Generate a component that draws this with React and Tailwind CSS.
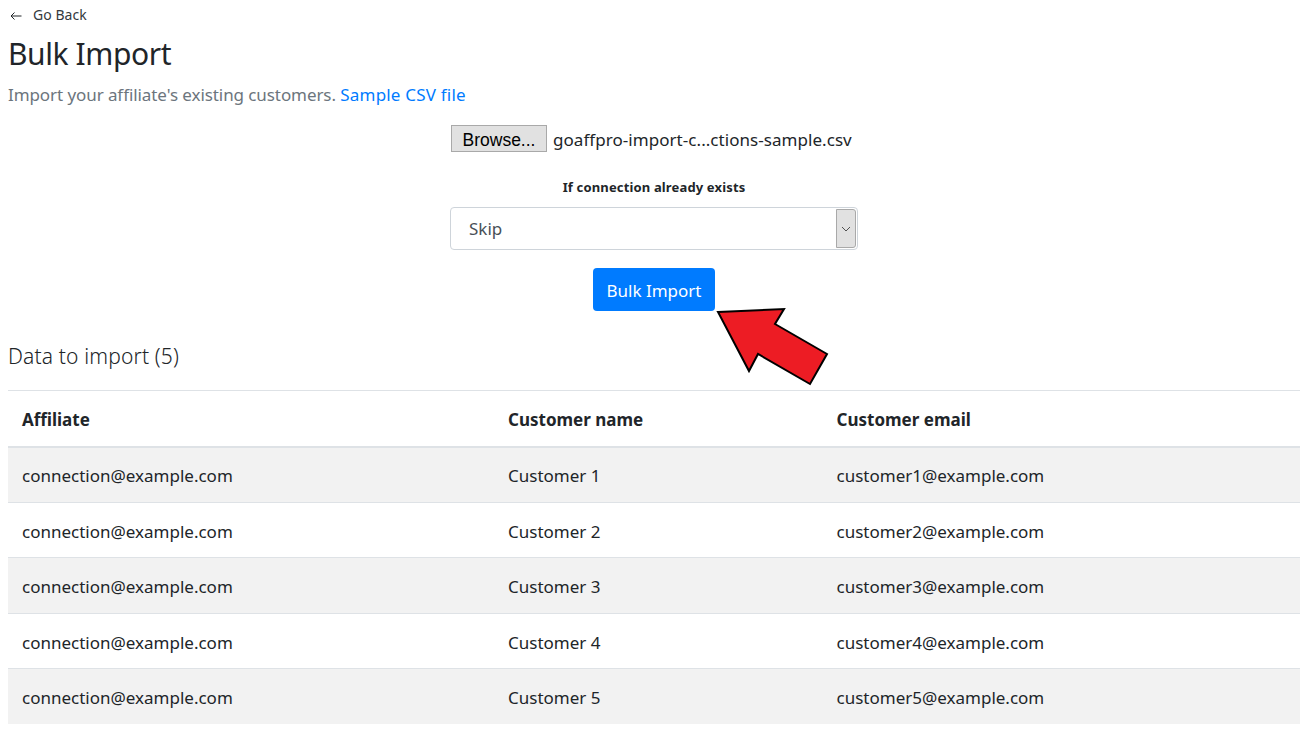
import React from "react";

const rows = [1, 2, 3, 4, 5];

const Arrow = () => (
  <svg className="absolute left-[710px] top-[300px]" width="125" height="92" viewBox="0 0 125 92">
    <polygon
      points="8,12 74,9 65,24 117,54 100,84 48,54 39,71"
      fill="#ed1c24"
      stroke="#000"
      strokeWidth="2"
    />
  </svg>
);

const App = () => {
  return (
    <div className="relative h-[732px] overflow-hidden bg-white px-2 font-['Noto_Sans',sans-serif] text-[#212529]">
      <div className="flex h-[29px] items-center pl-[2px] text-[14px] text-[#343a40]">
        <svg width="12" height="10" viewBox="0 0 12 10" fill="none" stroke="#212529" strokeWidth="1" className="mt-[3px]">
          <path d="M11.5 5H1M4.5 1.5L1 5l3.5 3.5" />
        </svg>
        <span className="ml-[11px] tracking-[0.05px]">Go Back</span>
      </div>
      <h1 className="mt-[3px] text-[30px] leading-[44px] tracking-[-0.4px]">Bulk Import</h1>
      <p className="mt-[6px] text-[17px] leading-[26px] tracking-[-0.08px] text-[#6c757d]">
        Import your affiliate's existing customers.{" "}
        <span className="tracking-[0.2px] text-[#007bff]">Sample CSV file</span>
      </p>

      <div className="flex flex-col items-center">
        <div className="mt-[17px] flex h-[27px] w-[404px] items-center -translate-x-[1px]">
          <span className="flex h-[27px] w-[96px] items-center justify-center border border-[#a9a9a9] bg-[#e1e1e1] pt-[4px] font-['Liberation_Sans',sans-serif] text-[17.5px] text-black">
            Browse...
          </span>
          <span className="ml-[6px] pt-[3px] text-[17px] tracking-[0.05px]">goaffpro-import-c...ctions-sample.csv</span>
        </div>
        <div className="mt-[25px] text-[13px] font-bold leading-[20px] tracking-[0.15px]">If connection already exists</div>
        <div className="mt-[10px] flex h-[43px] w-[408px] items-center justify-between rounded-[4px] border border-[#ced4da] pl-[18px] pr-[1px]">
          <span className="text-[17px] text-[#495057]">Skip</span>
          <span className="flex h-[39px] w-[20px] items-center justify-center rounded-r-[3px] border border-[#a9a9a9] bg-[#e1e1e1]">
            <svg width="10" height="6" viewBox="0 0 10 6" fill="none" stroke="#505050" strokeWidth="1">
              <path d="M1 1l4 4 4-4" />
            </svg>
          </span>
        </div>
        <button className="mt-[18px] h-[43px] w-[122px] rounded-[4px] bg-[#007bff] pt-[2px] text-[17px] text-white">
          Bulk Import
        </button>
      </div>

      <h2 className="mt-[30px] text-[21px] font-light leading-[30px] tracking-[0.15px]">Data to import (5)</h2>

      <table className="mt-[19px] w-[1292px] table-fixed border-collapse text-[17px]">
        <thead>
          <tr className="h-[56px] border-t border-b-2 border-t-[#dee2e6] border-b-[#dee2e6]">
            <th className="w-[486px] pl-[14px] pt-[2px] text-left font-bold">Affiliate</th>
            <th className="w-[328.5px] pl-[14px] pt-[2px] text-left font-bold">Customer name</th>
            <th className="pl-[14px] pt-[2px] text-left font-bold">Customer email</th>
          </tr>
        </thead>
        <tbody>
          {rows.map((n) => (
            <tr key={n} className={`h-[55.5px] border-b border-[#dee2e6] last:border-b-0 ${n % 2 === 1 ? "bg-[#f2f2f2]" : "bg-white"}`}>
              <td className="pl-[14px] pt-[3px]">connection@example.com</td>
              <td className="pl-[14px] pt-[3px]">Customer {n}</td>
              <td className="pl-[14px] pt-[3px]">customer{n}@example.com</td>
            </tr>
          ))}
        </tbody>
      </table>

      <Arrow />
    </div>
  );
};

export default App;
